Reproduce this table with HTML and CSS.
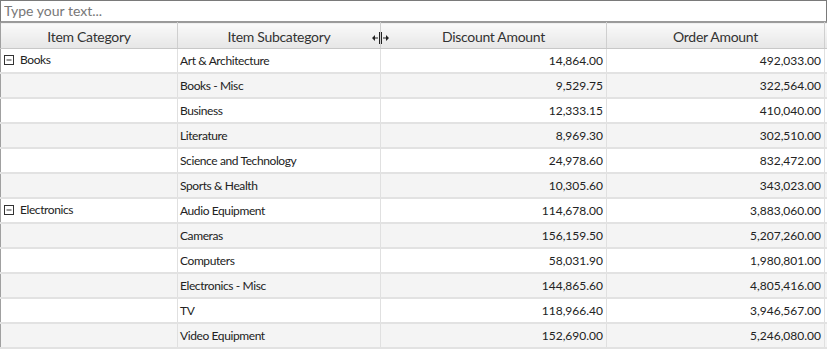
FILE: index.html
```html
<!DOCTYPE html>
<html>
<head>
<meta charset="utf-8">
<link rel="stylesheet" href="styles.css">
</head>
<body>
<div class="page">
  <input class="search" type="text" placeholder="Type your text...">
  <table class="grid">
    <colgroup>
      <col class="c1"><col class="c2"><col class="c3"><col class="c4"><col class="c5">
    </colgroup>
    <thead>
      <tr>
        <th>Item Category</th>
        <th class="resize-host">Item Subcategory
          <svg class="resize" width="17" height="12" viewBox="0 0 17 12">
            <rect x="7" y="0" width="1" height="12" fill="#222"/>
            <rect x="9" y="0" width="1" height="12" fill="#222"/>
            <path d="M1 6h5M11 6h5" stroke="#222" fill="none" stroke-width="1"/>
            <path d="M0 6l3-3v6zM17 6l-3-3v6z" fill="#222"/>
          </svg>
        </th>
        <th>Discount Amount</th>
        <th>Order Amount</th>
        <th class="last"></th>
      </tr>
    </thead>
    <tbody>
      <tr><td><span class="tg"><svg width="10" height="10" viewBox="0 0 10 10"><rect x="0.5" y="0.5" width="9" height="9" fill="none" stroke="#333"/><path d="M2.5 5h5" stroke="#333"/></svg>Books</span></td><td>Art &amp; Architecture</td><td class="n">14,864.00</td><td class="n">492,033.00</td><td class="last"></td></tr>
      <tr class="alt"><td></td><td>Books - Misc</td><td class="n">9,529.75</td><td class="n">322,564.00</td><td class="last"></td></tr>
      <tr><td></td><td>Business</td><td class="n">12,333.15</td><td class="n">410,040.00</td><td class="last"></td></tr>
      <tr class="alt"><td></td><td>Literature</td><td class="n">8,969.30</td><td class="n">302,510.00</td><td class="last"></td></tr>
      <tr><td></td><td>Science and Technology</td><td class="n">24,978.60</td><td class="n">832,472.00</td><td class="last"></td></tr>
      <tr class="alt"><td></td><td>Sports &amp; Health</td><td class="n">10,305.60</td><td class="n">343,023.00</td><td class="last"></td></tr>
      <tr><td><span class="tg"><svg width="10" height="10" viewBox="0 0 10 10"><rect x="0.5" y="0.5" width="9" height="9" fill="none" stroke="#333"/><path d="M2.5 5h5" stroke="#333"/></svg>Electronics</span></td><td>Audio Equipment</td><td class="n">114,678.00</td><td class="n">3,883,060.00</td><td class="last"></td></tr>
      <tr class="alt"><td></td><td>Cameras</td><td class="n">156,159.50</td><td class="n">5,207,260.00</td><td class="last"></td></tr>
      <tr><td></td><td>Computers</td><td class="n">58,031.90</td><td class="n">1,980,801.00</td><td class="last"></td></tr>
      <tr class="alt"><td></td><td>Electronics - Misc</td><td class="n">144,865.60</td><td class="n">4,805,416.00</td><td class="last"></td></tr>
      <tr><td></td><td>TV</td><td class="n">118,966.40</td><td class="n">3,946,567.00</td><td class="last"></td></tr>
      <tr class="alt"><td></td><td>Video Equipment</td><td class="n">152,690.00</td><td class="n">5,246,080.00</td><td class="last"></td></tr>
    </tbody>
  </table>
</div>
</body>
</html>
```

FILE: styles.css
```css
html, body {
  margin: 0;
  padding: 0;
  background: #ffffff;
  overflow: hidden;
}
.page {
  width: 827px;
  font-family: "Lato", "Open Sans", sans-serif;
  color: #222;
}
.search {
  display: block;
  box-sizing: border-box;
  width: 827px;
  height: 22px;
  margin: 0;
  padding: 0 3px 2px;
  border: 1px solid #7a7a7a;
  border-bottom-color: #9a9a9a;
  font-family: "Lato", "Open Sans", sans-serif;
  font-size: 14px;
  color: #333;
  outline: none;
}
.search::placeholder {
  color: #777;
}
.grid {
  border-collapse: collapse;
  table-layout: fixed;
  width: 829px;
  border-left: 1px solid #a0a0a0;
}
.c1 { width: 177px; }
.c2 { width: 203px; }
.c3 { width: 226px; }
.c4 { width: 218px; }
.c5 { width: 5px; }
.grid th {
  height: 23px;
  padding: 2px 0 0;
  font-weight: normal;
  font-size: 14px;
  letter-spacing: -0.3px;
  color: #333;
  background: linear-gradient(#fafafa, #e6e6e6);
  border-top: 1px solid #9c9c9c;
  border-bottom: 1px solid #c8c8c8;
  border-right: 1px solid #cfcfcf;
  text-align: center;
  white-space: nowrap;
}
.resize-host {
  position: relative;
}
.resize {
  position: absolute;
  right: -9px;
  top: 9px;
}
.grid td {
  height: 22px;
  padding: 0 2px 1px;
  font-size: 12px;
  letter-spacing: -0.4px;
  color: #222;
  border-right: 1px solid #e0e0e0;
  border-bottom: 2px solid #e2e2e2;
  white-space: nowrap;
  overflow: hidden;
  background: #ffffff;
}
.grid tr.alt td {
  background: #f4f4f4;
}
.grid td.n {
  text-align: right;
  padding-right: 3px;
  letter-spacing: 0;
}
.grid td.last, .grid th.last {
  border-right: none;
}
.tg {
  display: inline-flex;
  align-items: center;
  gap: 6px;
  padding-left: 1px;
}
.tg svg {
  display: block;
}
```
